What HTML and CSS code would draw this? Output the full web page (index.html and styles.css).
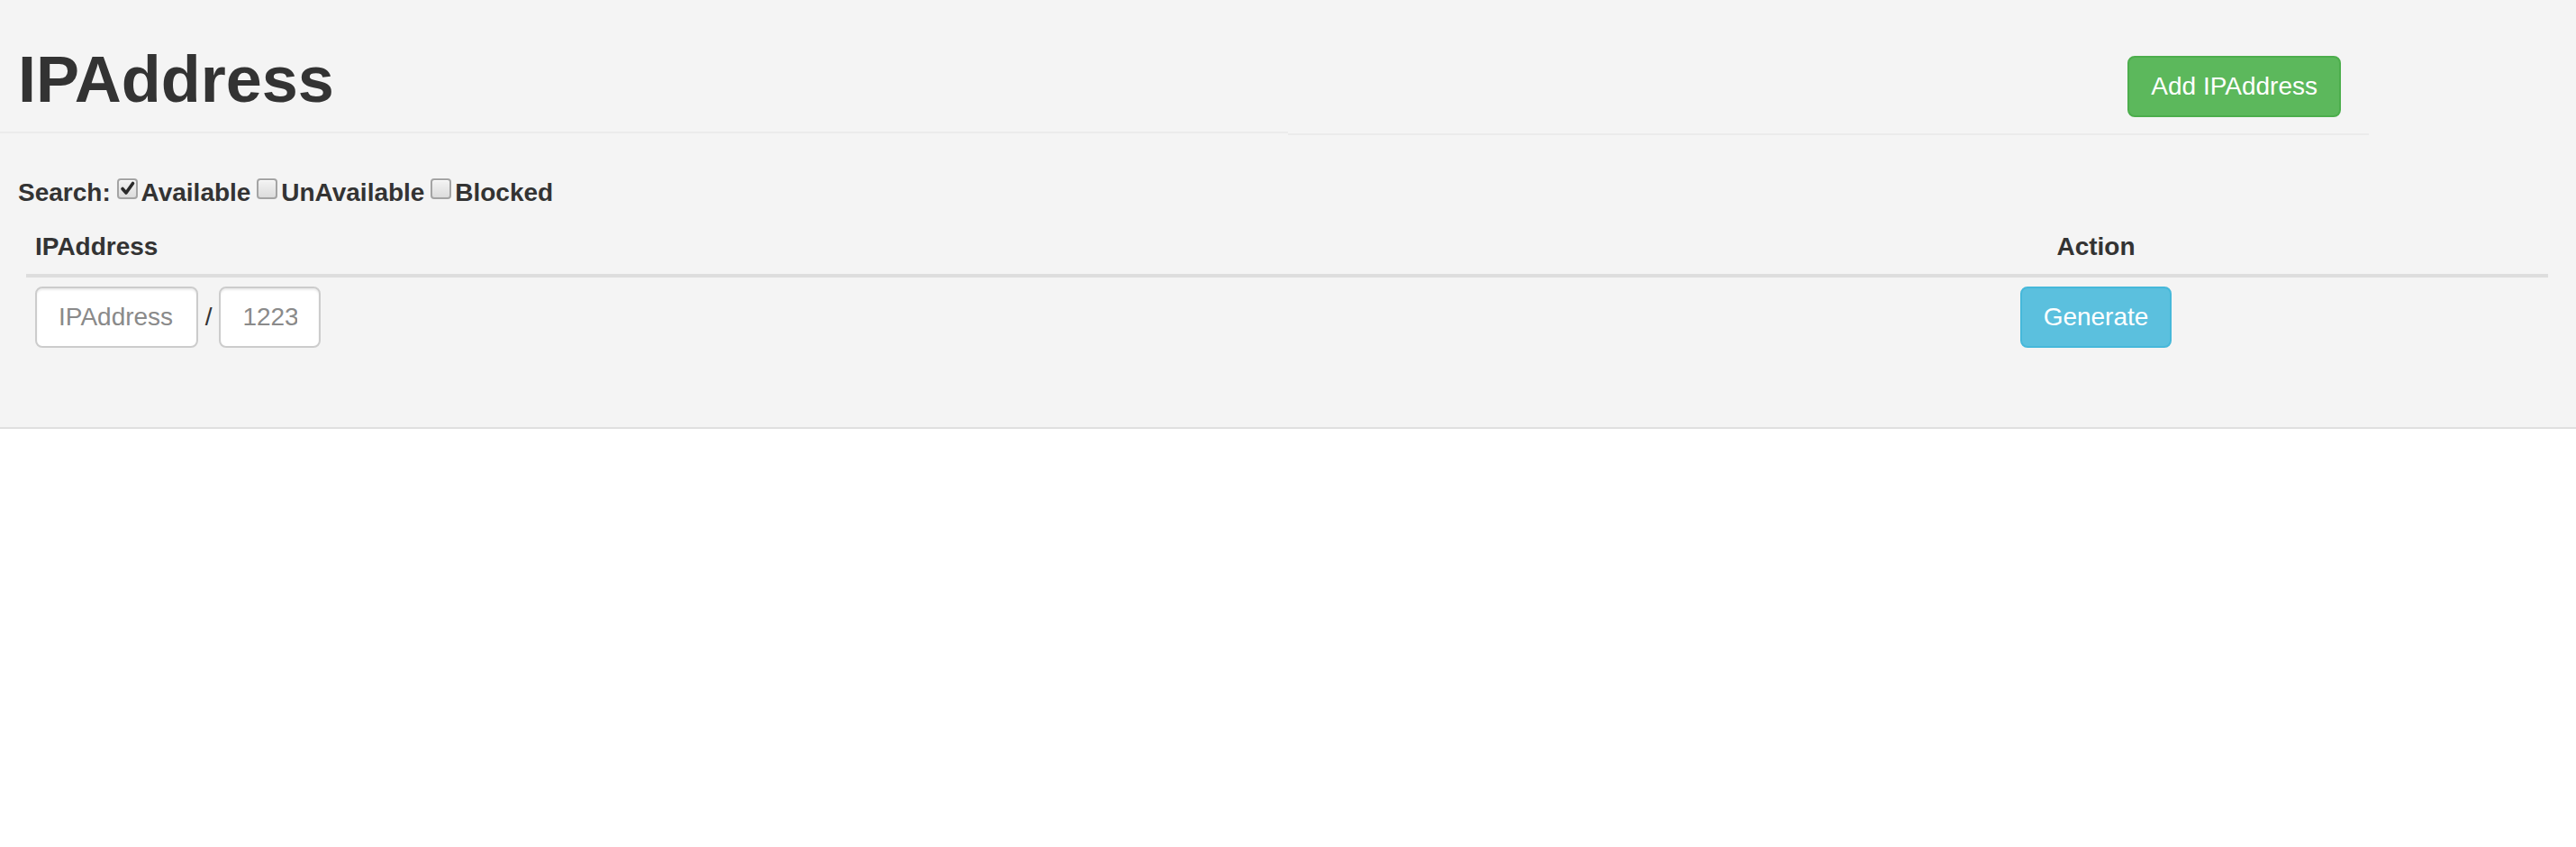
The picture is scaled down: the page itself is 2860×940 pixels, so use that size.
FILE: index.html
```html
<!DOCTYPE html>
<html lang="en">
<head>
<meta charset="utf-8">
<title>IPAddress</title>
<link rel="stylesheet" href="styles.css">
</head>
<body>
<div class="panel">
  <div class="head">
    <div class="head-left">
      <h1 class="title">IPAddress</h1>
    </div>
    <div class="head-right">
      <button class="btn btn-success" type="button">Add IPAddress</button>
    </div>
  </div>
  <div class="search">
    <label class="search-label">Search: <span class="cb"><svg class="tick" viewBox="0 0 19 19" width="19" height="19"><path d="M4 9.5 L8 14 L15.5 3.5" fill="none" stroke="#2b2b2b" stroke-width="3.6" stroke-linecap="round" stroke-linejoin="round"/></svg></span>Available <span class="cb"></span>UnAvailable <span class="cb"></span>Blocked</label>
  </div>
  <div class="table-wrap">
    <table class="tbl">
      <colgroup><col class="col-ip"><col class="col-action"></colgroup>
      <thead>
        <tr><th>IPAddress</th><th class="center">Action</th></tr>
      </thead>
      <tbody>
        <tr>
          <td>
            <div class="ipfields">
              <input class="fc fc-ip" type="text" placeholder="IPAddress">
              <span class="slash">/</span>
              <input class="fc fc-mask" type="text" placeholder="1223">
            </div>
          </td>
          <td class="center"><button class="btn btn-info" type="button">Generate</button></td>
        </tr>
      </tbody>
    </table>
  </div>
</div>
</body>
</html>
```

FILE: styles.css
```css
* { box-sizing: border-box; }

html, body {
  margin: 0;
  padding: 0;
  background: #ffffff;
}

body {
  font-family: "Liberation Sans", Arial, sans-serif;
  font-size: 28px;
  line-height: 40px;
  color: #333333;
}

.panel {
  background: #f4f4f4;
  border-bottom: 2px solid #e0e0e0;
  padding-bottom: 38px;
}

.head {
  display: flex;
  align-items: flex-start;
}

.head-left {
  width: 1430px;
  padding: 48px 0 18px 20px;
  border-bottom: 2px solid #ebebeb;
}

.title {
  margin: 0;
  font-size: 72px;
  line-height: 80px;
  font-weight: 700;
  color: #333333;
}

.head-right {
  width: 1200px;
  display: flex;
  justify-content: flex-end;
  padding: 62px 31px 18px 0;
  border-bottom: 2px solid #ebebeb;
}

.btn {
  display: inline-block;
  margin: 0;
  padding: 12px 24px;
  font-family: "Liberation Sans", Arial, sans-serif;
  font-size: 28px;
  line-height: 40px;
  font-weight: 400;
  color: #ffffff;
  border: 2px solid transparent;
  border-radius: 8px;
  cursor: pointer;
}

.btn-success {
  background: #5cb85c;
  border-color: #4cae4c;
}

.btn-info {
  background: #5bc0de;
  border-color: #46b8da;
}

.search {
  margin-top: 44px;
  padding-left: 20px;
}

.search-label {
  display: inline-block;
  margin-bottom: 10px;
  font-weight: 700;
}

.cb {
  display: inline-block;
  width: 23px;
  height: 23px;
  margin: 0 4px 0 -1px;
  vertical-align: 2px;
  border: 2px solid #a4a4a4;
  border-radius: 4px;
  background: linear-gradient(#f3f3f3, #dcdcdc);
  box-shadow: inset 0 1px 0 #ffffff;
  position: relative;
}

.tick {
  position: absolute;
  left: 0;
  top: 0;
}

.table-wrap {
  padding: 0 31px 0 29px;
}

.tbl {
  width: 100%;
  table-layout: fixed;
  border-collapse: collapse;
  border-spacing: 0;
  margin-bottom: 40px;
}

.col-ip { width: 1796px; }
.col-action { width: 1004px; }

.tbl th {
  padding: 10px;
  text-align: left;
  font-weight: 700;
  line-height: 40px;
  vertical-align: bottom;
  border-bottom: 4px solid #dddddd;
}

.tbl td {
  padding: 10px;
  vertical-align: top;
}

.tbl .center {
  text-align: center;
}

.ipfields {
  display: flex;
  align-items: center;
}

.fc {
  display: block;
  height: 68px;
  margin: 0;
  padding: 12px 24px;
  font-family: "Liberation Sans", Arial, sans-serif;
  font-size: 28px;
  line-height: 40px;
  color: #555555;
  background: #ffffff;
  border: 2px solid #cccccc;
  border-radius: 8px;
  box-shadow: inset 0 2px 2px rgba(0, 0, 0, 0.075);
  outline: none;
}

.fc::placeholder {
  color: #8a8a8a;
  opacity: 1;
}

.fc-ip { width: 181px; }
.fc-mask { width: 113px; }

.slash {
  margin: 0 7.8px;
  line-height: 40px;
}
```
